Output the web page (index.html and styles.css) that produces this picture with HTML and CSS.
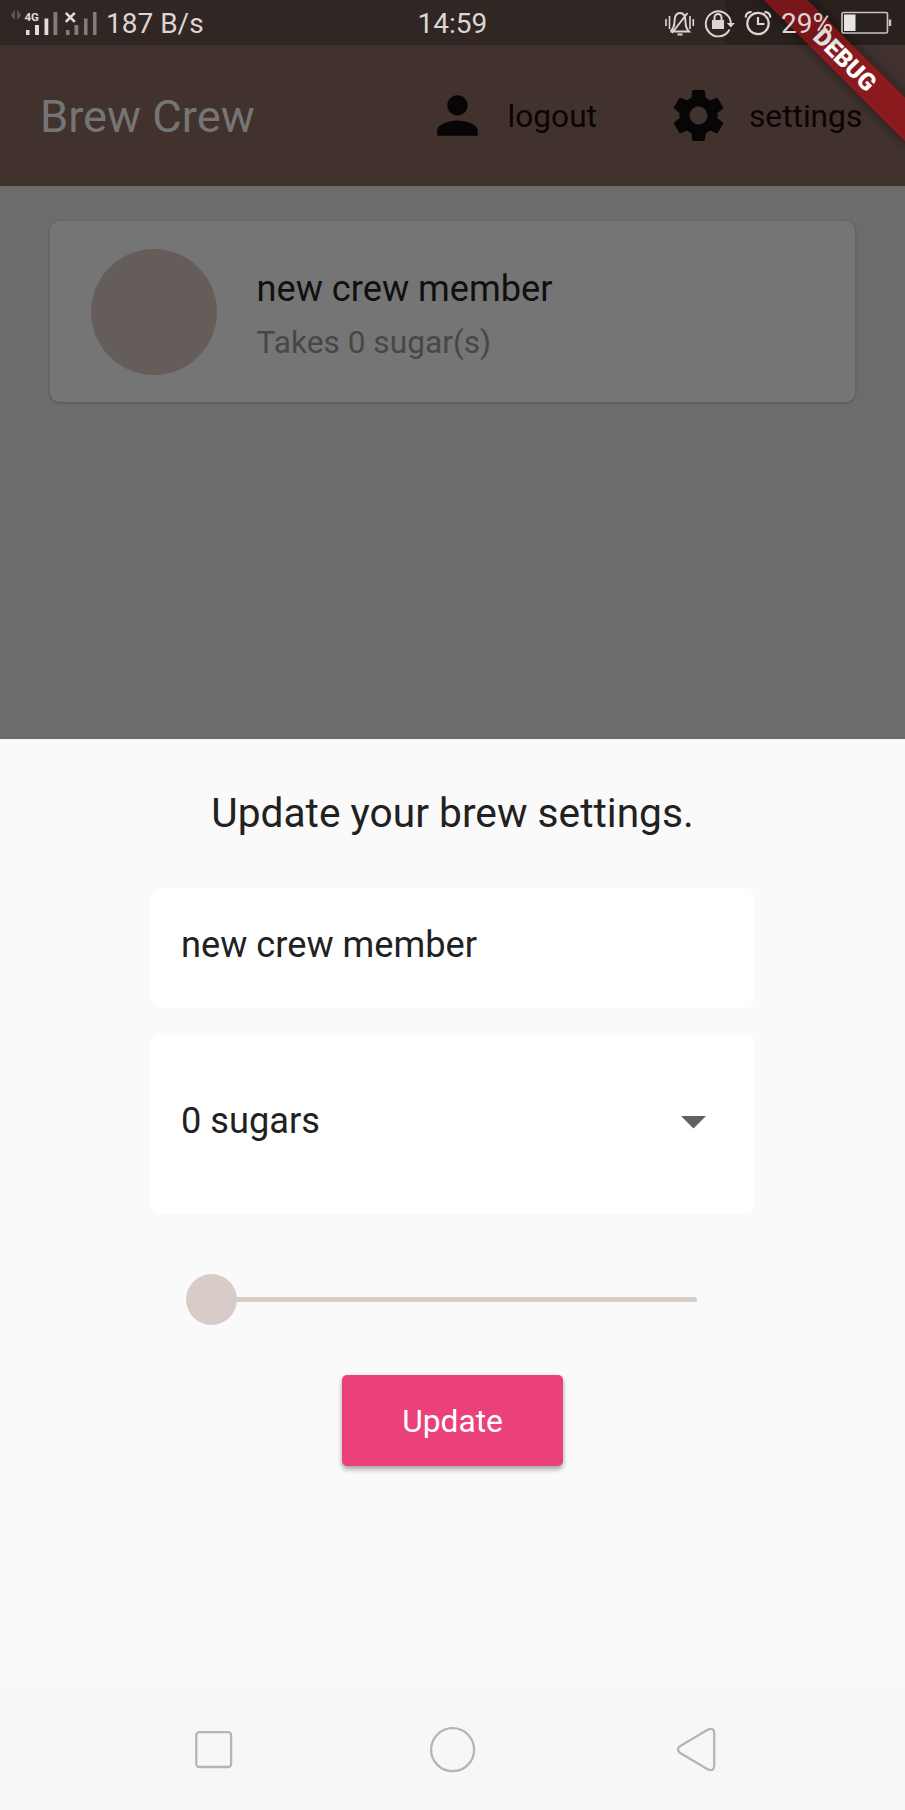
FILE: index.html
```html
<!DOCTYPE html>
<html lang="en">
<head>
<meta charset="utf-8">
<title>Brew Crew</title>
<link rel="stylesheet" href="styles.css">
</head>
<body>
<div class="phone">
  <header class="status">
    <svg class="signals" width="90" height="45" viewBox="8 0 90 45">
      <path d="M10.500 14l4.500-5v10zM21.500 14l-4.500-5v10z" fill="#5d5451"/>
      <g fill="#e3dcda"><rect x="26" y="29" width="3.500" height="5"/><rect x="35" y="24" width="4" height="10"/><rect x="44.500" y="17.500" width="3.800" height="16.500"/></g>
      <g fill="#857c79"><rect x="53.500" y="11" width="3.800" height="23"/><rect x="66" y="29" width="3.500" height="5"/><rect x="74.500" y="24" width="3.800" height="10"/><rect x="84" y="17.500" width="3.500" height="16.500"/><rect x="93" y="11" width="3.500" height="23"/></g>
      <path d="M65.800 11.800l9 9M74.800 11.800l-9 9" stroke="#e3dcda" stroke-width="2.600"/>
      <text x="24.500" y="20" class="network">4G</text>
    </svg>
    <span class="speed">187 B/s</span>
    <span class="clock">14:59</span>
    <div class="tray">
      <svg width="30" height="28" viewBox="665 8 30 28" fill="none" stroke="#ddd5d2" stroke-width="1.600">
        <path d="M666 18v7M669.500 15v13M690 15v13M693.300 18v7"/>
        <path d="M670.500 30.500h18.500c-3-3-3.500-5.500-3.500-10 0-5.500-2-8.500-5.500-8.500s-5.500 3-5.500 8.500c0 4.500-1 7-4 10M677.500 33.500h5M687.500 12l-15.500 20" stroke-width="2"/>
      </svg>
      <svg width="32" height="30" viewBox="704 8 32 30" fill="none" stroke="#ddd5d2" stroke-width="1.900">
        <path d="M729.500 29.500A12.500 12.500 0 1 1 730.800 23"/>
        <path d="M726.800 23h8l-4 4.500z" fill="#ddd5d2" stroke="none"/>
        <rect x="712" y="20" width="12" height="9" fill="#ddd5d2" stroke="none"/>
        <path d="M714.500 20v-2.500a3.500 3.500 0 0 1 7 0V20" stroke-width="2"/>
      </svg>
      <svg width="28" height="28" viewBox="744 9 28 28" fill="none" stroke="#ddd5d2" stroke-width="2.200">
        <circle cx="758" cy="23.500" r="10.700"/><path d="M758 17v7h6.500M746 17.500c-.8-3 2-6 5.500-5.300M770 17.500c.8-3-2-6-5.500-5.300"/>
      </svg>
      <span class="percent">29%</span>
      <svg width="52" height="24" viewBox="840 11 52 24" fill="none" stroke="#c9c3c1" stroke-width="1.600">
        <rect x="842" y="12.500" width="45.500" height="20.500" rx="1.500"/><rect x="844" y="14.500" width="11.500" height="16.500" fill="#e9e5e3" stroke="none"/><path d="M890 19.500v6.500" stroke-width="2.500"/>
      </svg>
    </div>
  </header>

  <div class="debug"><span>DEBUG</span></div>
  <div class="debug-shade"></div>

  <nav class="appbar">
    <h1 class="brand">Brew Crew</h1>
    <svg class="person" width="61" height="61" viewBox="0 0 24 24" fill="#070505"><path d="M12 12c2.210 0 4-1.790 4-4s-1.790-4-4-4-4 1.790-4 4 1.790 4 4 4zm0 2c-2.670 0-8 1.340-8 4v2h16v-2c0-2.660-5.330-4-8-4z"/></svg>
    <span class="action logout">logout</span>
    <svg class="gear" width="61" height="61" viewBox="0 0 24 24" fill="#070505"><path d="M19.430 12.980c.04-.32.070-.64.070-.98s-.03-.66-.07-.98l2.110-1.650c.19-.15.240-.42.120-.64l-2-3.460c-.12-.22-.39-.3-.61-.22l-2.490 1c-.52-.4-1.080-.73-1.690-.98l-.38-2.650C14.460 2.180 14.250 2 14 2h-4c-.25 0-.46.180-.49.420l-.38 2.650c-.61.250-1.170.590-1.690.98l-2.490-1c-.23-.09-.49 0-.61.220l-2 3.460c-.13.220-.07.490.12.640l2.110 1.650c-.04.320-.07.650-.07.980s.03.660.07.980l-2.110 1.650c-.19.150-.24.420-.12.640l2 3.460c.12.220.39.300.61.220l2.490-1c.52.400 1.080.730 1.690.980l.38 2.650c.03.240.24.420.49.420h4c.25 0 .46-.18.490-.42l.38-2.650c.61-.25 1.170-.59 1.690-.98l2.490 1c.23.090.49 0 .61-.22l2-3.460c.12-.22.070-.49-.12-.64l-2.110-1.650zM12 15.500c-1.930 0-3.500-1.570-3.500-3.500s1.570-3.500 3.500-3.500 3.500 1.570 3.500 3.500-1.570 3.500-3.500 3.500z"/></svg>
    <span class="action">settings</span>
  </nav>

  <main class="list">
    <article class="card">
      <div class="avatar"></div>
      <div class="details">
        <div class="name">new crew member</div>
        <div class="sugar">Takes 0 sugar(s)</div>
      </div>
    </article>
  </main>

  <section class="sheet">
    <h2 class="heading">Update your brew settings.</h2>
    <div class="field input">new crew member</div>
    <div class="field select"><span class="value">0 sugars</span>
      <svg class="arrow" width="25" height="13" viewBox="0 0 25 13"><path d="M0 0h25L12.500 12.500z" fill="#616161"/></svg>
    </div>
    <div class="slider"><div class="thumb"></div><div class="track"></div></div>
    <button class="update">Update</button>
  </section>

  <footer class="navbar">
    <svg width="905" height="122" viewBox="0 1688 905 122" fill="none" stroke="#b5b5b5" stroke-width="2.300">
      <rect x="196.300" y="1732.200" width="34.800" height="34.800" rx="3"/>
      <circle cx="452.600" cy="1749.700" r="21.500"/>
      <path d="M679.500 1746.500L708 1729.600q6-2.500 6.200 3.400v33q-.2 5.900-6.200 3.400L679.500 1752.500q-3-3 0-6z"/>
    </svg>
  </footer>
</div>
</body>
</html>
```
FILE: styles.css
```css
* { box-sizing: border-box; }
body { margin: 0; font-family: Roboto, sans-serif; background: #fafafa; }
svg { display: block; flex: none; }
h1, h2 { margin: 0; font-weight: 400; }
.phone { position: relative; width: 905px; height: 1810px; overflow: hidden; display: flex; flex-direction: column; background: #6d6c6a; white-space: nowrap; }

.status { height: 45px; flex: none; display: grid; grid-template-columns: 98px 311.500px 1fr auto; align-items: center; padding: 0 13px 0 8px; background: #302623; color: #ddd5d2; font-size: 28px; line-height: 45px; }
.speed, .clock { padding-top: 1px; }
.network { font: 700 11.5px Roboto, sans-serif; fill: #e3dcda; }
.status > * { position: relative; z-index: 3; }
.tray { display: flex; align-items: center; }
.tray svg:nth-child(2) { margin-left: 9px; }
.tray svg:nth-child(3) { margin-left: 8px; }
.percent { margin: 0 8px 0 9px; width: 51px; line-height: 43px; }

.debug { position: absolute; z-index: 1; left: 741.500px; top: 43.500px; width: 206px; height: 31px; transform: rotate(45deg); background: #8b1a1e; box-shadow: 0 0 13px rgba(0,0,0,.5); color: #fff; text-align: center; font-size: 24.2px; font-weight: 900; line-height: 32px; }
.debug-shade { position: absolute; z-index: 2; top: 0; right: 0; width: 180px; height: 45px; background: rgba(0,0,0,.13); }

.appbar { height: 141px; flex: none; display: flex; align-items: center; padding: 0 0 0 40px; background: #41322e; }
.brand { width: 387px; color: #757575; font-size: 45.25px; line-height: 60px; padding-top: 2px; }
.action { color: #0b0403; font-size: 31.7px; line-height: 60px; padding-top: 2px; }
.logout { width: 160px; }
.person { margin-right: 19.500px; }
.gear { margin-right: 20.500px; }

.list { height: 553px; flex: none; padding: 35px 50px; }
.card { height: 181px; display: flex; align-items: center; padding-left: 40.500px; gap: 40px; background: #757575; border-radius: 9px; box-shadow: 0 1px 3px rgba(0,0,0,.2), 0 0 2px rgba(0,0,0,.1); }
.avatar { width: 126px; height: 126px; border-radius: 50%; background: #645d5a; }
.details { padding-top: 8px; }
.name { color: #101010; font-size: 36.2px; line-height: 54px; }
.sugar { color: #474747; font-size: 31.7px; line-height: 54px; }

.sheet { height: 949px; flex: none; padding: 45px 151px 0; background: #fafafa; color: #212121; display: flex; flex-direction: column; align-items: center; }
.heading { font-size: 40.7px; line-height: 58px; height: 104px; }
.field { width: 603px; background: #fff; border-radius: 9px; padding: 0 48px 0 30px; font-size: 36.2px; }
.input { height: 120px; line-height: 113px; }
.select { height: 181px; margin-top: 25px; display: flex; align-items: center; justify-content: space-between; }
.value { padding-bottom: 6px; }
.arrow { margin-bottom: 3px; }
.slider { width: 510.500px; height: 51px; margin: 60px 22.500px 0 0; display: flex; align-items: center; }
.thumb { width: 51px; height: 51px; border-radius: 50%; background: #d7ccc8; }
.track { flex: 1; height: 5px; border-radius: 0 2px 2px 0; background: #d7ccc8; }
.update { width: 221px; height: 91px; margin-top: 50px; padding: 2px 0 0; border: 0; border-radius: 5px; background: #ec407a; color: #fff; font-family: inherit; font-size: 31.7px; box-shadow: 0 4px 5px rgba(0,0,0,.25), 0 1px 4px rgba(0,0,0,.15); }
.navbar { height: 122px; flex: none; background: #f7f7f7; }
```
